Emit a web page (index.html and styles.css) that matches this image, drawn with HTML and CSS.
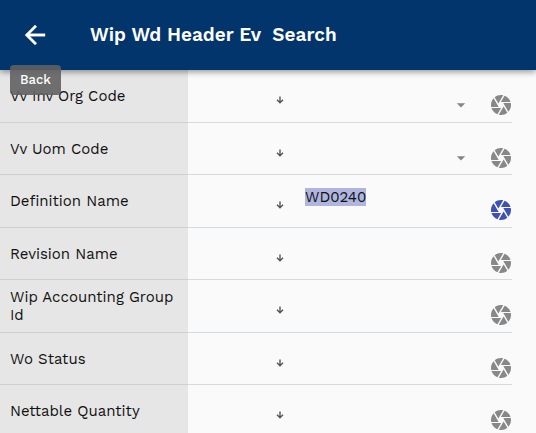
FILE: index.html
```html
<!DOCTYPE html>
<html lang="en">
<head>
<meta charset="utf-8">
<meta name="viewport" content="width=device-width, initial-scale=1">
<title>Wip Wd Header Ev Search</title>
<link rel="stylesheet" href="styles.css">
</head>
<body>
<svg class="sprite" aria-hidden="true">
  <symbol id="camera" viewBox="0 0 24 24"><path d="M9.4 10.5l4.77-8.26C13.47 2.09 12.75 2 12 2c-2.4 0-4.6.85-6.32 2.25l3.66 6.35.06-.1zM21.54 9c-.92-2.92-3.15-5.26-6-6.34L11.88 9h9.66zm.26 1h-7.49l.29.5 4.76 8.25C21 16.97 22 14.61 22 12c0-.69-.07-1.35-.2-2zM8.54 12l-3.9-6.75C3.01 7.03 2 9.39 2 12c0 .69.07 1.35.2 2h7.49l-1.15-2zm-6.08 3c.92 2.92 3.15 5.26 6 6.34L12.12 15H2.46zm11.27 0l-3.9 6.76c.7.15 1.42.24 2.17.24 2.4 0 4.6-.85 6.32-2.25l-3.66-6.35-.93 1.6z"/></symbol>
  <symbol id="down" viewBox="0 0 8 8"><path d="M4 .5v6M1 3.8l3 2.9 3-2.9" fill="none" stroke="currentColor" stroke-width="1.4"/></symbol>
  <symbol id="caret" viewBox="0 0 24 24"><path d="M7 10l5 5 5-5z"/></symbol>
</svg>
<header class="bar">
  <button class="back" type="button" aria-describedby="back-tip" aria-label="Back">
    <svg viewBox="0 0 24 24"><path d="M20 11H7.83l5.59-5.59L12 4l-8 8 8 8 1.41-1.41L7.83 13H20v-2z" stroke="currentColor" stroke-width=".3"/></svg>
  </button>
  <h1 class="title">Wip Wd Header Ev  Search</h1>
  <span class="tooltip" id="back-tip" role="tooltip">Back</span>
</header>
<form class="fields">
  <div class="row">
    <label class="label" for="org">Vv Inv Org Code</label>
    <button class="sort" type="button" aria-label="Sort"><svg><use href="#down"/></svg></button>
    <div class="picker"><select class="control" id="org"><option></option></select><svg><use href="#caret"/></svg></div>
    <button class="scan" type="button" aria-label="Scan"><svg><use href="#camera"/></svg></button>
  </div>
  <div class="row">
    <label class="label" for="uom">Vv Uom Code</label>
    <button class="sort" type="button" aria-label="Sort"><svg><use href="#down"/></svg></button>
    <div class="picker"><select class="control" id="uom"><option></option></select><svg><use href="#caret"/></svg></div>
    <button class="scan" type="button" aria-label="Scan"><svg><use href="#camera"/></svg></button>
  </div>
  <div class="row">
    <label class="label" for="definition">Definition Name</label>
    <button class="sort" type="button" aria-label="Sort"><svg><use href="#down"/></svg></button>
    <input class="control" id="definition" type="text" value="WD0240">
    <button class="scan active" type="button" aria-label="Scan"><svg><use href="#camera"/></svg></button>
  </div>
  <div class="row">
    <label class="label" for="revision">Revision Name</label>
    <button class="sort" type="button" aria-label="Sort"><svg><use href="#down"/></svg></button>
    <input class="control" id="revision" type="text">
    <button class="scan" type="button" aria-label="Scan"><svg><use href="#camera"/></svg></button>
  </div>
  <div class="row">
    <label class="label" for="group">Wip Accounting Group Id</label>
    <button class="sort" type="button" aria-label="Sort"><svg><use href="#down"/></svg></button>
    <input class="control" id="group" type="text">
    <button class="scan" type="button" aria-label="Scan"><svg><use href="#camera"/></svg></button>
  </div>
  <div class="row">
    <label class="label" for="status">Wo Status</label>
    <button class="sort" type="button" aria-label="Sort"><svg><use href="#down"/></svg></button>
    <input class="control" id="status" type="text">
    <button class="scan" type="button" aria-label="Scan"><svg><use href="#camera"/></svg></button>
  </div>
  <div class="row">
    <label class="label" for="quantity">Nettable Quantity</label>
    <button class="sort" type="button" aria-label="Sort"><svg><use href="#down"/></svg></button>
    <input class="control" id="quantity" type="text">
    <button class="scan" type="button" aria-label="Scan"><svg><use href="#camera"/></svg></button>
  </div>
</form>
<script src="main.js"></script>
</body>
</html>
```
FILE: styles.css
```css
* { box-sizing: border-box; }

body {
  margin: 0;
  height: 100vh;
  display: flex;
  flex-direction: column;
  overflow: hidden;
  background: #fafafa;
  color: #111;
  font: 400 15px/18px "Work Sans", Inter, "Liberation Sans", sans-serif;
}

.sprite { display: none; }

button {
  display: flex;
  align-items: center;
  justify-content: center;
  padding: 0;
  border: 0;
  background: none;
  color: inherit;
}

svg { flex: none; fill: currentColor; }

.bar {
  position: relative;
  z-index: 1;
  flex: none;
  display: flex;
  align-items: center;
  height: 70px;
  background: #03356d;
  color: #fff;
  box-shadow: 0 2px 6px rgba(0, 0, 0, .4);
}

.back { width: 70px; height: 70px; margin-right: 20px; }
.back svg { width: 30px; height: 30px; }

.title {
  margin: 0;
  font-size: 19px;
  font-weight: 600;
  line-height: 24px;
  white-space: pre;
}

.tooltip {
  position: absolute;
  top: 65px;
  left: 10px;
  padding: 6px 10px;
  border-radius: 4px;
  background: rgba(97, 97, 97, .9);
  font-size: 13px;
  font-weight: 500;
}

.fields { flex: 1; min-height: 0; overflow: hidden; padding-right: 24px; }

.row {
  display: grid;
  grid-template-columns: 188px minmax(0, 80fr) 24px 13px minmax(0, 166fr) 19px 22px;
  height: 53px;
  border-bottom: 1px solid #d5dade;
}
.row:nth-child(even) { height: 52px; }

/* The label shading runs beneath the row divider. */
.label {
  display: flex;
  align-items: center;
  padding: 0 10px;
  background: #e6e6e6;
  box-shadow: 0 1px #ccd0d2;
}

.sort { grid-column: 3; padding-top: 8px; color: #555; }
.sort svg { width: 8px; height: 8px; }

.control {
  grid-column: 5;
  width: 100%;
  height: 18px;
  margin: 13px 0 0;
  padding: 0;
  border: 0;
  outline: 0;
  appearance: none;
  background: none;
  color: inherit;
  font: inherit;
}
.control::selection { background: #afb5df; color: #111; }

.picker { grid-column: 5; position: relative; }
.picker svg {
  position: absolute;
  top: 25px;
  right: 0;
  width: 20px;
  height: 20px;
  color: #858585;
  pointer-events: none;
}

.scan { grid-column: 7; padding-top: 18px; color: #888; }
.scan svg { width: 24px; height: 24px; }
.scan.active { color: #3f51b5; }
```
FILE: main.js
```js
const field = document.getElementById("definition");
field.focus();
field.select();
```
